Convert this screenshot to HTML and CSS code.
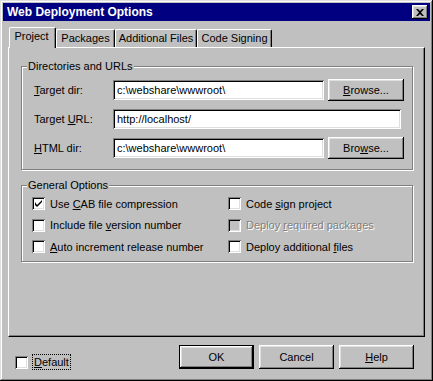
FILE: index.html
```html
<!DOCTYPE html>
<html lang="en">
<head>
  <meta charset="UTF-8" />
  <title>Web Deployment Options</title>
  <link rel="stylesheet" href="styles.css">
</head>
<body>
  <div class="window">
    <div class="titlebar">
      <span class="title">Web Deployment Options</span>
      <button class="close" type="button">
        <svg width="8" height="7" viewBox="0 0 8 7"><path d="M0 0h2l2 2 2-2h2L5 3.5 8 7H6L4 5 2 7H0l3-3.5z" fill="#000"/></svg>
      </button>
    </div>

    <div class="tabs">
      <div class="tab active">Project</div>
      <div class="tab t-packages">Packages</div>
      <div class="tab t-files">Additional Files</div>
      <div class="tab t-signing">Code Signing</div>
    </div>

    <div class="panel">
      <fieldset class="group dirs">
        <legend>Directories and URLs</legend>
        <div class="dir-grid">
          <label><u>T</u>arget dir:</label>
          <div class="field">c:\webshare\wwwroot\</div>
          <button class="btn" type="button"><u>B</u>rowse...</button>

          <label>Target <u>U</u>RL:</label>
          <div class="field wide">http://localhost/</div>

          <label><u>H</u>TML dir:</label>
          <div class="field">c:\webshare\wwwroot\</div>
          <button class="btn" type="button">Bro<u>w</u>se...</button>
        </div>
      </fieldset>

      <fieldset class="group options">
        <legend>General Options</legend>
        <div class="opt-grid">
          <div class="check"><span class="box"><svg width="7" height="7" viewBox="0 0 7 7"><path d="M0 2v3l2 2 5-5V0L2 5z" fill="#000"/></svg></span><span>Use <u>C</u>AB file compression</span></div>
          <div class="check"><span class="box"></span><span>Code <u>s</u>ign project</span></div>
          <div class="check"><span class="box"></span><span>Include file <u>v</u>ersion number</span></div>
          <div class="check disabled"><span class="box"></span><span>Deploy <u>r</u>equired packages</span></div>
          <div class="check"><span class="box"></span><span><u>A</u>uto increment release number</span></div>
          <div class="check"><span class="box"></span><span>Deploy additional <u>f</u>iles</span></div>
        </div>
      </fieldset>
    </div>

    <div class="footer">
      <div class="check default"><span class="box"></span><span class="focus"><u>D</u>efault</span></div>
      <div class="buttons">
        <button class="btn dlg default-btn" type="button">OK</button>
        <button class="btn dlg" type="button">Cancel</button>
        <button class="btn dlg" type="button"><u>H</u>elp</button>
      </div>
    </div>
  </div>
</body>
</html>
```

FILE: styles.css
```css
body {
  margin: 0;
  background: #c0c0c0;
  font-family: 'Liberation Sans', Arial, sans-serif;
  font-size: 11px;
  color: #000;
}

.window {
  width: 433px;
  height: 381px;
  box-sizing: border-box;
  padding: 3px;
  background: #c0c0c0;
  box-shadow: inset -1px -1px #000, inset 1px 1px #dfdfdf, inset -2px -2px #808080, inset 2px 2px #fff;
}

.titlebar {
  height: 18px;
  background: #000080;
  color: #fff;
  display: flex;
  align-items: center;
  justify-content: space-between;
  padding-left: 4px;
}

.title {
  font-weight: bold;
  font-size: 12px;
}

.close {
  width: 16px;
  height: 14px;
  margin-right: 2px;
  padding: 0;
  border: none;
  background: #c0c0c0;
  display: flex;
  align-items: center;
  justify-content: center;
  box-shadow: inset -1px -1px #000, inset 1px 1px #fff, inset -2px -2px #808080, inset 2px 2px #dfdfdf;
}

/* tabs */
.tabs {
  display: flex;
  align-items: flex-end;
  height: 20px;
  margin-top: 6px;
  padding-left: 6px;
}

.tab {
  height: 18px;
  box-sizing: border-box;
  border-top: 1px solid #fff;
  border-left: 1px solid #fff;
  border-right: 1px solid #000;
  border-radius: 2px 2px 0 0;
  box-shadow: inset -1px 0 #808080;
  text-align: center;
  line-height: 16px;
}

.tab.active {
  position: relative;
  z-index: 1;
  width: 47px;
  height: 21px;
  margin-bottom: -1px;
  background: #c0c0c0;
  line-height: 17px;
  padding-right: 2px;
}

.t-packages { width: 59px; }
.t-files { width: 82px; }
.t-signing { width: 75px; }

.panel {
  width: 417px;
  height: 290px;
  box-sizing: border-box;
  margin-left: 5px;
  border: 1px solid;
  border-color: #fff #000 #000 #fff;
  box-shadow: inset -1px -1px #808080;
  padding: 12px 11px 0 12px;
}

/* group boxes */
.group {
  margin: 0;
  border: 1px solid #808080;
  box-shadow: inset 1px 1px #fff, 1px 1px #fff;
  min-width: 0;
}

.group legend {
  padding: 0 1px;
  line-height: 13px;
  background: #c0c0c0;
}

.dirs {
  padding: 6px 0 10px 12px;
}

.dirs legend {
  margin-left: -7px;
}

.dir-grid {
  display: grid;
  grid-template-columns: 75px 211px 76px;
  grid-auto-rows: 22px;
  column-gap: 4px;
  row-gap: 7px;
  align-items: center;
}

.field {
  height: 20px;
  box-sizing: border-box;
  background: #fff;
  padding-left: 4px;
  line-height: 20px;
  white-space: nowrap;
  box-shadow: inset 1px 1px #808080, inset -1px -1px #fff, inset 2px 2px #000, inset -2px -2px #dfdfdf;
}

.field.wide {
  grid-column: span 2;
  width: 288px;
}

.btn {
  font: inherit;
  color: #000;
  background: #c0c0c0;
  border: none;
  padding: 0;
  height: 22px;
  box-shadow: inset -1px -1px #000, inset 1px 1px #fff, inset -2px -2px #808080, inset 2px 2px #dfdfdf;
}

.options {
  margin-top: 9px;
  padding: 5px 0 8px 10px;
}

.options legend {
  margin-left: -5px;
}

.opt-grid {
  display: grid;
  grid-template-columns: 196px 1fr;
  grid-auto-rows: 13px;
  row-gap: 8.5px;
}

.check {
  display: flex;
  align-items: center;
  gap: 5px;
  white-space: nowrap;
}

.box {
  width: 13px;
  height: 13px;
  box-sizing: border-box;
  background: #fff;
  display: flex;
  align-items: center;
  justify-content: center;
  box-shadow: inset 1px 1px #808080, inset -1px -1px #fff, inset 2px 2px #000, inset -2px -2px #dfdfdf;
}

.check.disabled {
  color: #808080;
  text-shadow: 1px 1px #fff;
}

.check.disabled .box {
  background: #c0c0c0;
}

/* footer */
.footer {
  display: flex;
  justify-content: space-between;
  align-items: flex-start;
  margin-top: 8px;
  padding: 0 16px 0 12px;
}

.check.default {
  margin-top: 10px;
}

.focus {
  outline: 1px dotted #000;
  padding: 0 1px;
  line-height: 14px;
}

.buttons {
  display: flex;
  gap: 5px;
}

.btn.dlg {
  width: 75px;
  height: 24px;
}

.btn.default-btn {
  box-shadow: inset 0 0 0 1px #000, inset -2px -2px #000, inset 2px 2px #fff, inset -3px -3px #808080, inset 3px 3px #dfdfdf;
}
```
